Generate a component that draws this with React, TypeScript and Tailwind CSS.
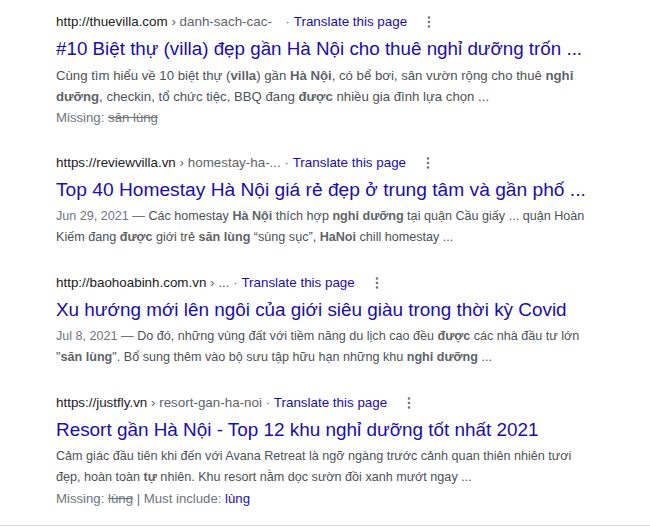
import React from 'react'

type Line = React.ReactNode

type Result = {
  site: string
  path: string
  pathGap?: boolean
  title: string
  titleSize: string
  textSize: string
  lines: Line[]
  extra?: React.ReactNode
}

// Small kebab icon shown after "Translate this page"
const Kebab = () => (
  <svg width="4" height="12" viewBox="0 0 4 12" className="ml-[20px] shrink-0" aria-hidden>
    <circle cx="2" cy="1.5" r="1.3" fill="#70757a" />
    <circle cx="2" cy="6" r="1.3" fill="#70757a" />
    <circle cx="2" cy="10.5" r="1.3" fill="#70757a" />
  </svg>
)

const B = ({ children }: { children: React.ReactNode }) => (
  <b className="font-bold text-[#5f6368]">{children}</b>
)

const Date = ({ children }: { children: React.ReactNode }) => (
  <span className="text-[#70757a]">{children} — </span>
)

const RESULTS: Result[] = [
  {
    site: 'http://thuevilla.com',
    path: 'danh-sach-cac-',
    pathGap: true,
    title: '#10 Biệt thự (villa) đẹp gần Hà Nội cho thuê nghỉ dưỡng trốn ...',
    titleSize: 'text-[18.8px]',
    textSize: 'text-[13.2px]',
    lines: [
      <>
        Cùng tìm hiểu về 10 biệt thự (<B>villa</B>) gần <B>Hà Nội</B>, có bể bơi, sân vườn rộng cho thuê{' '}
        <B>nghỉ</B>
      </>,
      <>
        <B>dưỡng</B>, checkin, tổ chức tiệc, BBQ đang <B>được</B> nhiều gia đình lựa chọn ...
      </>,
    ],
    extra: (
      <>
        Missing: <s>săn lùng</s>
      </>
    ),
  },
  {
    site: 'https://reviewvilla.vn',
    path: 'homestay-ha-...',
    title: 'Top 40 Homestay Hà Nội giá rẻ đẹp ở trung tâm và gần phố ...',
    titleSize: 'text-[19.2px]',
    textSize: 'text-[12.6px]',
    lines: [
      <>
        <Date>Jun 29, 2021</Date>Các homestay <B>Hà Nội</B> thích hợp <B>nghỉ dưỡng</B> tại quận Cầu giấy ... quận Hoàn
      </>,
      <>
        Kiếm đang <B>được</B> giới trẻ <B>săn lùng</B> “sùng sục”, <B>HaNoi</B> chill homestay ...
      </>,
    ],
  },
  {
    site: 'http://baohoabinh.com.vn',
    path: '...',
    title: 'Xu hướng mới lên ngôi của giới siêu giàu trong thời kỳ Covid',
    titleSize: 'text-[18.9px]',
    textSize: 'text-[12.6px]',
    lines: [
      <>
        <Date>Jul 8, 2021</Date>Do đó, những vùng đất với tiềm năng du lịch cao đều <B>được</B> các nhà đầu tư lớn
      </>,
      <>
        "<B>săn lùng</B>". Bổ sung thêm vào bộ sưu tập hữu hạn những khu <B>nghỉ dưỡng</B> ...
      </>,
    ],
  },
  {
    site: 'https://justfly.vn',
    path: 'resort-gan-ha-noi',
    title: 'Resort gần Hà Nội - Top 12 khu nghỉ dưỡng tốt nhất 2021',
    titleSize: 'text-[18.9px]',
    textSize: 'text-[12.6px]',
    lines: [
      <>Cảm giác đầu tiên khi đến với Avana Retreat là ngỡ ngàng trước cảnh quan thiên nhiên tươi</>,
      <>
        đẹp, hoàn toàn <B>tự</B> nhiên. Khu resort nằm dọc sườn đồi xanh mướt ngay ...
      </>,
    ],
    extra: (
      <>
        Missing: <s>lùng</s> | Must include: <span className="text-[#1a0dab]">lùng</span>
      </>
    ),
  },
]

export default function App() {
  return (
    <div className="w-[650px] h-[528px] bg-white overflow-hidden font-['Liberation_Sans',Arial,sans-serif]">
      <div className="pl-[56px] pt-[11px] flex flex-col gap-[24px]">
        {RESULTS.map((r) => (
          <div key={r.site}>
            {/* url row */}
            <div className="flex items-center h-[22px] text-[13.4px] whitespace-nowrap">
              <span className="text-[#202124]">{r.site}</span>
              <span className="text-[#5f6368]">&nbsp;›&nbsp;{r.path}</span>
              <span className={`text-[#70757a] ${r.pathGap ? 'ml-[10px]' : ''}`}>&nbsp;·&nbsp;</span>
              <span className="text-[#1a0dab]">Translate this page</span>
              <Kebab />
            </div>
            <h3 className={`mt-[3px] ${r.titleSize} leading-[26px] text-[#1a0dab] whitespace-nowrap`}>{r.title}</h3>
            <div className="mt-[3px] leading-[21px] text-[#4d5156]">
              {r.lines.map((l, i) => (
                <div key={i} className={`whitespace-nowrap ${r.textSize}`}>
                  {l}
                </div>
              ))}
              {r.extra && <div className="whitespace-nowrap text-[13.2px] text-[#70757a]">{r.extra}</div>}
            </div>
          </div>
        ))}
      </div>
      <div className="mt-[16px] border-t border-[#dadce0]" />
    </div>
  )
}
